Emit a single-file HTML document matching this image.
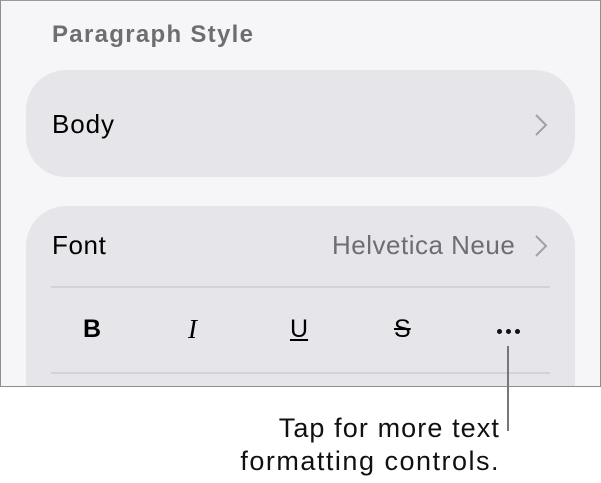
<!DOCTYPE html>
<html><head><style>
body{margin:0;width:601px;height:483px;background:#fff;position:relative;overflow:hidden;font-family:"Liberation Sans",Arial,sans-serif;}
.panel{position:absolute;left:0;top:0;width:599px;height:385px;border:1px solid #8e8e8e;border-top-color:#9a9a9a;background:#f6f6f8;overflow:hidden;}
.card{position:absolute;left:25px;width:549px;background:#e6e5ea;border-radius:40px;}
.t{position:absolute;white-space:nowrap;}
.div{position:absolute;left:50px;width:499px;height:2px;background:#d3d2d7;}
</style></head><body>
<div class="panel">
 <div class="t" style="left:51px;top:20px;font-size:24px;font-weight:bold;color:#6e6e72;letter-spacing:1.3px;">Paragraph Style</div>
 <div class="card" style="top:69px;height:107px;"></div>
 <div class="t" style="left:51px;top:108px;font-size:26px;color:#000;letter-spacing:0.9px;">Body</div>
 <svg style="position:absolute;left:532px;top:112px" width="16" height="24"><path d="M3 2 L13 12 L3 22" fill="none" stroke="#a0a0a5" stroke-width="2"/></svg>
 <div class="card" style="top:205px;height:260px;"></div>
 <div class="t" style="left:51px;top:229px;font-size:26px;color:#000;letter-spacing:0.6px;">Font</div>
 <div class="t" style="left:331px;top:229px;font-size:26px;color:#6e6e72;letter-spacing:0.5px;">Helvetica Neue</div>
 <svg style="position:absolute;left:532px;top:233px" width="16" height="24"><path d="M3 2 L13 12 L3 22" fill="none" stroke="#a0a0a5" stroke-width="2"/></svg>
 <div class="div" style="top:285px"></div>
 <div class="t" style="left:82px;top:314px;font-size:25px;font-weight:bold;">B</div>
 <div class="t" style="left:187px;top:313px;font-size:27px;font-style:italic;font-family:'Liberation Serif',serif;">I</div>
 <div class="t" style="left:289px;top:314px;font-size:25px;text-decoration:underline;">U</div>
 <div class="t" style="left:393px;top:314px;font-size:25px;text-decoration:line-through;">S</div>
 <div style="position:absolute;left:496px;top:328px;width:5px;height:5px;border-radius:50%;background:#111;box-shadow:9px 0 #111,18px 0 #111;"></div>
 <div class="div" style="top:371px"></div>
</div>
<div style="position:absolute;left:507px;top:346px;width:2px;height:85px;background:#777;"></div>
<div class="t" style="right:101px;top:413px;font-size:27px;color:#111;text-align:right;letter-spacing:1.1px;">Tap for more text</div>
<div class="t" style="right:101px;top:446px;font-size:27px;color:#111;text-align:right;letter-spacing:1.5px;">formatting controls.</div>
</body></html>
